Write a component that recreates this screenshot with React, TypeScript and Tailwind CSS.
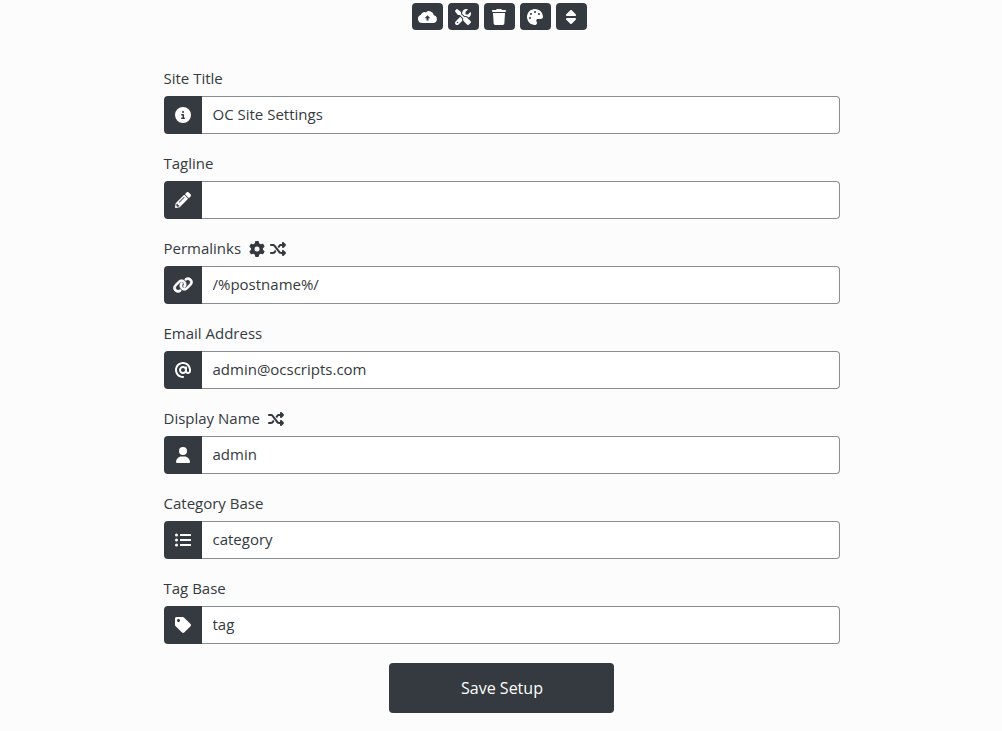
import React from "react";
import { FaListUl, FaPencilAlt, FaTag } from "react-icons/fa";
import {
  FaAt,
  FaCircleInfo,
  FaGear,
  FaLink,
  FaPalette,
  FaScrewdriverWrench,
  FaShuffle,
  FaSort,
  FaTrash,
  FaUser,
} from "react-icons/fa6";

const square = "h-4 w-4";

// cloud with the small arrow the package icons don't have
function CloudUpload() {
  return (
    <svg viewBox="0 0 19 13" className="h-[13px] w-[19px]">
      <path
        fill="currentColor"
        d="M4.2 13A4.2 4.2 0 0 1 2.9 4.8 3.6 3.6 0 0 1 7.9 2.4 4.7 4.7 0 0 1 15.8 5.3 3.9 3.9 0 0 1 15.2 13Z"
      />
      <path fill="#343a40" d="M9.5 5.2 12.3 8.2H10.5V10.6H8.5V8.2H6.7Z" />
    </svg>
  );
}

const toolbar = [
  { key: "upload", icon: <CloudUpload /> },
  { key: "tools", icon: <FaScrewdriverWrench className={square} /> },
  { key: "trash", icon: <FaTrash className="h-4 w-[14px]" /> },
  { key: "palette", icon: <FaPalette className={square} /> },
  { key: "sort", icon: <FaSort className="h-4 w-[10px]" /> },
];

const fields = [
  { label: "Site Title", value: "OC Site Settings", icon: <FaCircleInfo className={square} /> },
  { label: "Tagline", value: "", icon: <FaPencilAlt className={square} /> },
  {
    label: "Permalinks",
    value: "/%postname%/",
    icon: <FaLink className="h-4 w-5" strokeWidth={24} />,
    extras: [<FaGear key="gear" className={square} />, <FaShuffle key="shuffle" className={square} />],
  },
  { label: "Email Address", value: "admin@ocscripts.com", icon: <FaAt className={square} /> },
  {
    label: "Display Name",
    value: "admin",
    icon: <FaUser className="h-4 w-[14px]" />,
    extras: [<FaShuffle key="shuffle" className={square} />],
  },
  { label: "Category Base", value: "category", icon: <FaListUl className={square} /> },
  { label: "Tag Base", value: "tag", icon: <FaTag className={square} /> },
];

function App() {
  return (
    <div className="min-h-[731px] bg-[#fcfcfc] pt-[3px] font-['Open_Sans',sans-serif] text-[#343a40]">
      <div className="flex justify-center gap-[5px] pr-1">
        {toolbar.map((item) => (
          <button
            key={item.key}
            type="button"
            className="flex h-[27px] w-[31px] items-center justify-center rounded-[4px] bg-[#343a40] text-white"
          >
            {item.icon}
          </button>
        ))}
      </div>

      <form className="mx-auto mt-[38px] w-[677px]">
        {fields.map((field) => (
          <div key={field.label} className="mb-[19px] pl-px">
            <label className="mb-[6px] flex h-[22px] items-center text-[15px] leading-[22px]">
              <span className="-translate-y-px">{field.label}</span>
              {field.extras && <span className="ml-2 flex items-center gap-[5px]">{field.extras}</span>}
            </label>
            <div className="flex h-[38px]">
              <span className="flex w-[38px] shrink-0 items-center justify-center rounded-l-[4px] bg-[#343a40] text-white">
                {field.icon}
              </span>
              <input
                readOnly
                value={field.value}
                className="min-w-0 flex-1 rounded-r-[4px] border border-l-0 border-[#8a8d90] bg-white px-[11px] pb-[2px] text-[15px] text-[#343a40] outline-none"
              />
            </div>
          </div>
        ))}

        <div className="flex justify-center">
          <button
            type="button"
            className="h-[50px] w-[225px] rounded-[4px] bg-[#343a40] pl-[2px] text-[16px] font-medium text-white"
          >
            Save Setup
          </button>
        </div>
      </form>
    </div>
  );
}

export default App;
